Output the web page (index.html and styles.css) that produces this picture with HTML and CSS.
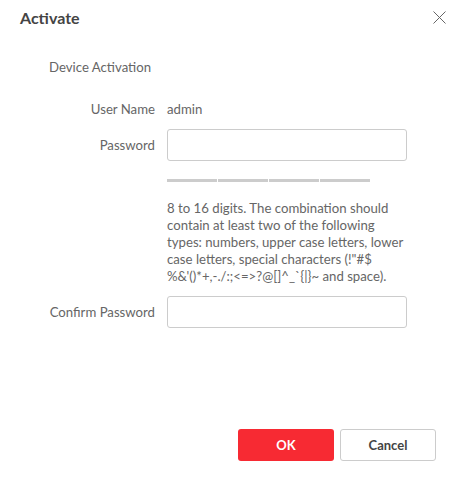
FILE: index.html
```
<!DOCTYPE html>
<html lang="en">
<head>
    <meta charset="UTF-8">
    <meta name="viewport" content="width=device-width, initial-scale=1.0">
    <title>Activate</title>
    <link rel="stylesheet" href="styles.css">
</head>
<body>
    <div class="dialog">
        <div class="dialog-header">
            <h2>Activate</h2>
            <button class="close-btn" aria-label="Close">
                <svg width="13" height="13" viewBox="0 0 13 13">
                    <path d="M0.5 0.5 L12.5 12.5 M12.5 0.5 L0.5 12.5" stroke="#666" stroke-width="1" fill="none"/>
                </svg>
            </button>
        </div>
        <div class="dialog-body">
            <div class="section-title">Device Activation</div>
            <div class="form-row user-row">
                <label>User Name</label>
                <span class="value">admin</span>
            </div>
            <div class="form-row">
                <label>Password</label>
                <input type="password" class="text-input">
            </div>
            <div class="form-row">
                <span class="spacer"></span>
                <div class="strength-bar">
                    <span></span><span></span><span></span><span></span>
                </div>
            </div>
            <div class="form-row hint-row">
                <span class="spacer"></span>
                <p class="hint">8 to 16 digits. The combination should contain at least two of the following types: numbers, upper case letters, lower case letters, special characters (!"#$ %&amp;'()*+,-./:;&lt;=&gt;?@[]^_`{|}~ and space).</p>
            </div>
            <div class="form-row">
                <label>Confirm Password</label>
                <input type="password" class="text-input">
            </div>
        </div>
        <div class="dialog-footer">
            <button class="btn btn-primary">OK</button>
            <button class="btn btn-default">Cancel</button>
        </div>
    </div>
</body>
</html>
```

FILE: styles.css
```
body {
    margin: 0;
    font-family: "Microsoft YaHei", Lato, sans-serif;
    background-color: white;
}
.dialog {
    width: 460px;
    height: 486px;
    display: flex;
    flex-direction: column;
}
.dialog-header {
    display: flex;
    justify-content: space-between;
    align-items: center;
    height: 35px;
    padding: 0 14px 0 20px;
}
h2 {
    margin: 0;
    font-size: 16px;
    font-weight: bold;
    color: #444;
}
.close-btn {
    border: none;
    background: none;
    padding: 0;
    width: 13px;
    height: 13px;
    cursor: pointer;
}
.dialog-body {
    flex: 1;
    padding: 0 53px 0 49px;
    font-size: 13.2px;
    color: #666;
}
.section-title {
    margin-top: 23px;
    margin-bottom: 24px;
    line-height: 18px;
}
.form-row {
    display: flex;
    align-items: center;
    margin-bottom: 18px;
}
.user-row {
    margin-bottom: 11px;
}
.hint-row {
    margin-bottom: 11px;
}
.form-row label,
.spacer {
    width: 106px;
    flex-shrink: 0;
    margin-right: 12px;
    text-align: right;
}
.value {
    line-height: 18px;
}
.text-input {
    width: 240px;
    height: 32px;
    box-sizing: border-box;
    border: 1px solid #ccc;
    border-radius: 3px;
    outline: none;
}
.strength-bar {
    display: flex;
    gap: 1px;
}
.strength-bar span {
    width: 50px;
    height: 3px;
    background-color: #ccc;
}
.hint {
    width: 240px;
    margin: 0;
    line-height: 17px;
}
.dialog-footer {
    display: flex;
    justify-content: flex-end;
    gap: 6px;
    padding: 0 24px 25px 0;
}
.btn {
    width: 96px;
    height: 32px;
    border-radius: 3px;
    font-family: inherit;
    font-size: 13px;
    font-weight: bold;
    cursor: pointer;
}
.btn-primary {
    border: none;
    background-color: #f72a33;
    color: white;
}
.btn-default {
    border: 1px solid #ccc;
    background-color: white;
    color: #444;
}
```
